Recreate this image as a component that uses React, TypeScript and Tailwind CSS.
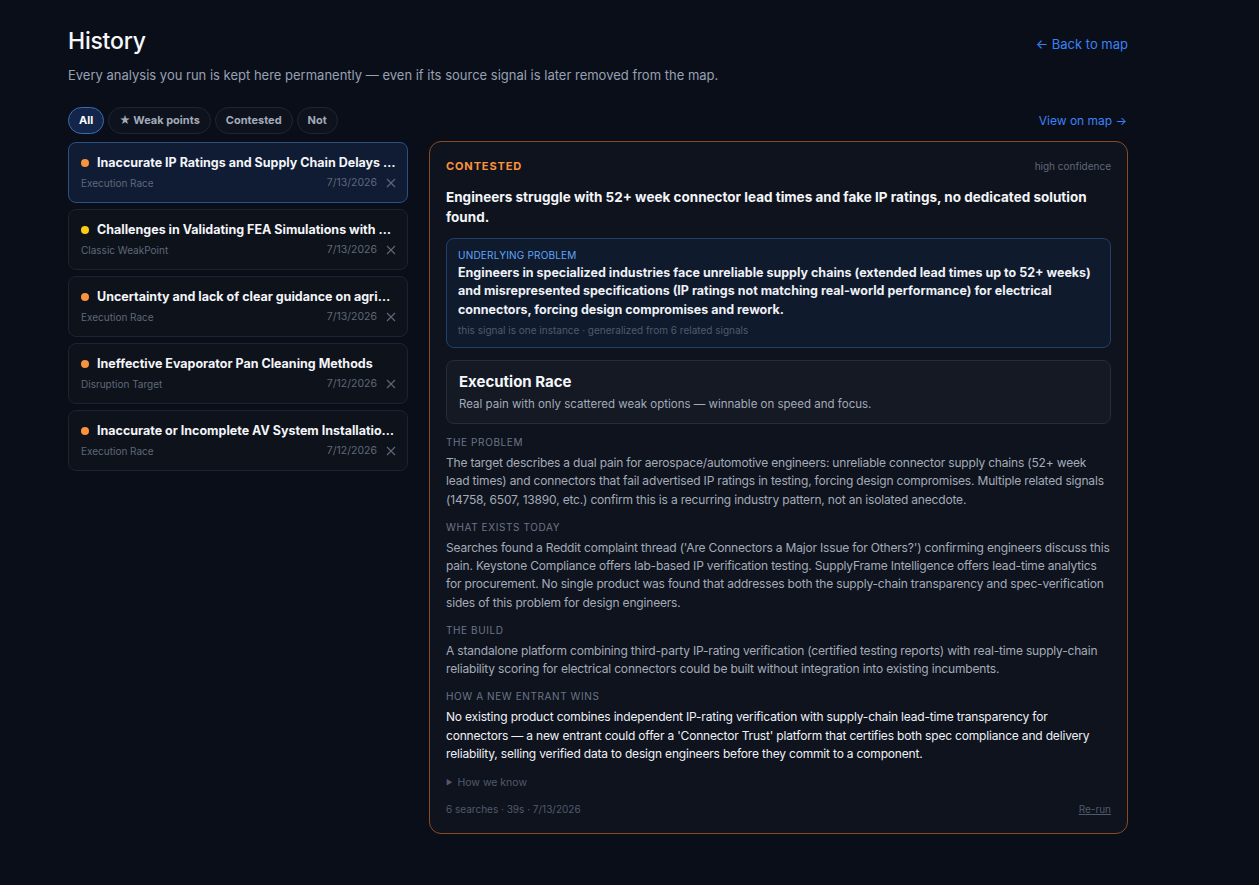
import { useState } from 'react';

type Item = {
  title: string;
  kind: string;
  date: string;
  dot: string;
};

const items: Item[] = [
  { title: 'Inaccurate IP Ratings and Supply Chain Delays for Electrical Connectors', kind: 'Execution Race', date: '7/13/2026', dot: 'bg-[#fb923c]' },
  { title: 'Challenges in Validating FEA Simulations with Physical Tests', kind: 'Classic WeakPoint', date: '7/13/2026', dot: 'bg-[#facc15]' },
  { title: 'Uncertainty and lack of clear guidance on agricultural regulations', kind: 'Execution Race', date: '7/13/2026', dot: 'bg-[#fb923c]' },
  { title: 'Ineffective Evaporator Pan Cleaning Methods', kind: 'Disruption Target', date: '7/12/2026', dot: 'bg-[#fb923c]' },
  { title: 'Inaccurate or Incomplete AV System Installation Documentation', kind: 'Execution Race', date: '7/12/2026', dot: 'bg-[#fb923c]' },
];

const tabs = ['All', '★ Weak points', 'Contested', 'Not'];

function Section({ label, children, bright }: { label: string; children: React.ReactNode; bright?: boolean }) {
  return (
    <div className="mt-[11px]">
      <div className="text-[10px] leading-[14px] uppercase tracking-[0.06em] text-[#6b7588]">{label}</div>
      <p className={`mt-[5px] text-[12px] leading-[18.25px] tracking-[-0.015em] ${bright ? 'text-[#eef1f6]' : 'text-[#a3abb9]'}`}>{children}</p>
    </div>
  );
}

export default function App() {
  const [tab, setTab] = useState('All');
  const [selected, setSelected] = useState(0);

  return (
    <div className="min-h-[885px] bg-[#0a0e19] font-['Inter',sans-serif] text-white">
      <div className="w-[1060px] ml-[68px] pt-[26px]">
        <div className="flex items-start justify-between">
          <div>
            <h1 className="text-[23px] leading-[30px] font-medium text-[#f5f7fb] tracking-[-0.01em]">History</h1>
            <p className="mt-[9px] text-[13px] leading-[20px] text-[#98a1b2]">
              Every analysis you run is kept here permanently — even if its source signal is later removed from the map.
            </p>
          </div>
          <a className="mt-[9px] text-[13px] text-[#3b82f6]">← Back to map</a>
        </div>

        <div className="mt-[22px] flex items-center justify-between">
          <div className="flex gap-[4px]">
            {tabs.map((t) => (
              <button
                key={t}
                onClick={() => setTab(t)}
                className={`h-[27px] px-[10px] rounded-full border text-[11px] font-bold ${
                  tab === t
                    ? 'bg-[#13264a] border-[#3b6bb5] text-white'
                    : 'bg-[#0d121d] border-[#1f2633] text-[#a3abb9]'
                }`}
              >
                {t}
              </button>
            ))}
          </div>
          <a className="mr-[1px] text-[12px] text-[#3b82f6]">View on map →</a>
        </div>

        <div className="mt-[8px] flex gap-[21px] items-start">
          <div className="w-[340px] flex flex-col gap-[6px]">
            {items.map((it, i) => (
              <div
                key={i}
                onClick={() => setSelected(i)}
                className={`h-[61px] rounded-[8px] border pl-[12px] pr-[11px] pt-[11px] ${
                  selected === i ? 'bg-[#0f1c33] border-[#2d4f82]' : 'bg-[#0e121b] border-[#1d2330]'
                }`}
              >
                <div className="flex items-center gap-[8px]">
                  <span className={`w-[8px] h-[8px] rounded-full shrink-0 ${it.dot}`} />
                  <span className="truncate text-[12.5px] font-bold text-[#f3f5f9] leading-[18px]">{it.title}</span>
                </div>
                <div className="mt-[2px] flex items-center justify-between">
                  <span className="text-[10px] text-[#5f6878] mt-[2px]">{it.kind}</span>
                  <div className="flex items-center gap-[9px] text-[10.5px] text-[#5f6878]">
                    <span>{it.date}</span>
                    <svg width="10" height="10" viewBox="0 0 10 10">
                      <path d="M1 1L9 9M9 1L1 9" stroke="#5f6878" strokeWidth="1.1" />
                    </svg>
                  </div>
                </div>
              </div>
            ))}
          </div>

          <div className="w-[700px] -mt-[1px] rounded-[12px] border border-[#8a4b22] bg-[#0f131d] px-[16px] pt-[16px] pb-[16px]">
            <div className="flex items-center justify-between">
              <span className="text-[11px] font-bold tracking-[0.08em] text-[#fb923c]">CONTESTED</span>
              <span className="text-[10px] text-[#5f6878]">high confidence</span>
            </div>
            <p className="mt-[12px] text-[13.5px] leading-[20px] font-bold text-[#f3f5f9]">
              Engineers struggle with 52+ week connector lead times and fake IP ratings, no dedicated solution found.
            </p>

            <div className="mt-[11px] rounded-[8px] border border-[#24406a] bg-[#0f1a2c] px-[11px] pt-[9px] pb-[10px]">
              <div className="text-[10px] leading-[14px] tracking-[0.02em] text-[#60a5fa]">UNDERLYING PROBLEM</div>
              <p className="mt-[2px] text-[12.5px] leading-[18.5px] font-bold text-[#eef1f6]">
                Engineers in specialized industries face unreliable supply chains (extended lead times up to 52+ weeks) and misrepresented specifications (IP ratings not matching real-world performance) for electrical connectors, forcing design compromises and rework.
              </p>
              <div className="mt-[4px] text-[10px] leading-[14px] text-[#4f5a6c]">
                this signal is one instance · generalized from 6 related signals
              </div>
            </div>

            <div className="mt-[12px] rounded-[8px] border border-[#262c38] bg-[#141923] px-[12px] pt-[11px] pb-[11px]">
              <div className="text-[15px] leading-[20px] font-bold text-[#f5f7fb]">Execution Race</div>
              <p className="mt-[4px] text-[11.5px] leading-[16px] text-[#a3abb9]">
                Real pain with only scattered weak options — winnable on speed and focus.
              </p>
            </div>

            <Section label="The problem">
              The target describes a dual pain for aerospace/automotive engineers: unreliable connector supply chains (52+ week lead times) and connectors that fail advertised IP ratings in testing, forcing design compromises. Multiple related signals (14758, 6507, 13890, etc.) confirm this is a recurring industry pattern, not an isolated anecdote.
            </Section>
            <Section label="What exists today">
              Searches found a Reddit complaint thread ('Are Connectors a Major Issue for Others?') confirming engineers discuss this pain. Keystone Compliance offers lab-based IP verification testing. SupplyFrame Intelligence offers lead-time analytics for procurement. No single product was found that addresses both the supply-chain transparency and spec-verification sides of this problem for design engineers.
            </Section>
            <Section label="The build">
              A standalone platform combining third-party IP-rating verification (certified testing reports) with real-time supply-chain reliability scoring for electrical connectors could be built without integration into existing incumbents.
            </Section>
            <Section label="How a new entrant wins" bright>
              No existing product combines independent IP-rating verification with supply-chain lead-time transparency for connectors — a new entrant could offer a 'Connector Trust' platform that certifies both spec compliance and delivery reliability, selling verified data to design engineers before they commit to a component.
            </Section>

            <div className="mt-[12px] flex items-center gap-[5px] text-[10.5px] text-[#4f5a6c]">
              <span className="text-[7px]">▶</span>
              <span>How we know</span>
            </div>

            <div className="mt-[11px] flex items-center justify-between text-[10px] text-[#4f5a6c]">
              <span>6 searches · 39s · 7/13/2026</span>
              <a className="underline">Re-run</a>
            </div>
          </div>
        </div>
      </div>
    </div>
  );
}
